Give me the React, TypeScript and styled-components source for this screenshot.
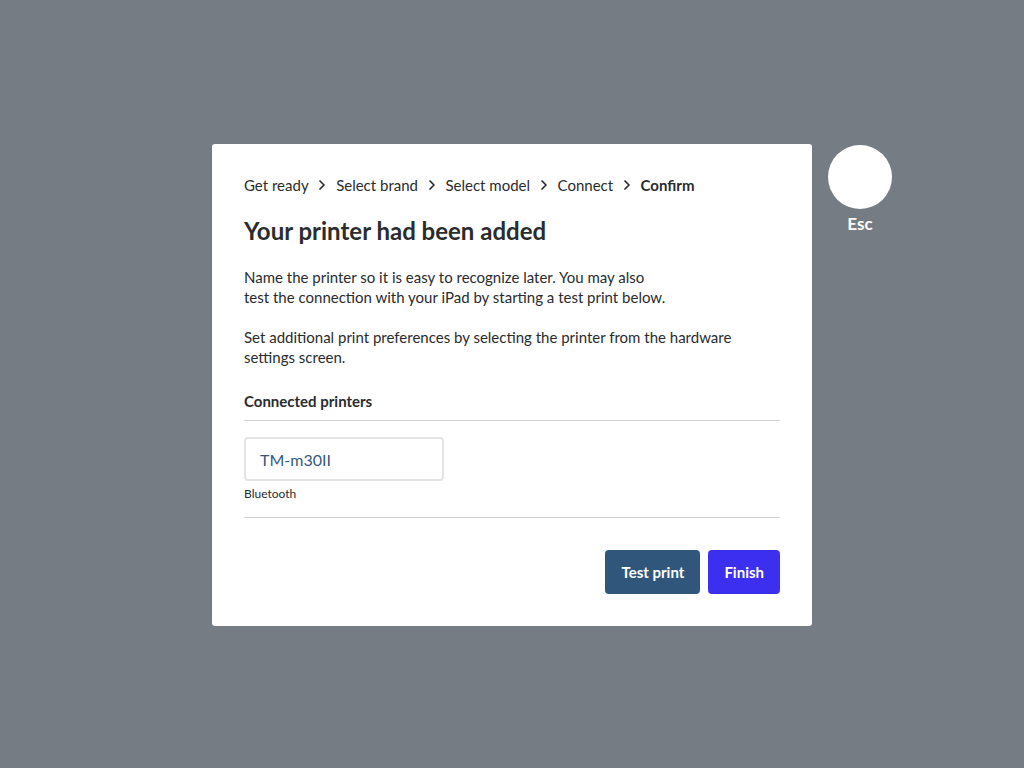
import React from "react";
import styled, { createGlobalStyle } from "styled-components";

const Global = createGlobalStyle`
  html, body { margin: 0; padding: 0; }
  body {
    background: #767c84;
    font-family: Lato, "Open Sans", sans-serif;
    color: #2a2c2e;
  }
`;

const Overlay = styled.div`
  width: 1024px;
  height: 768px;
  display: flex;
  align-items: center;
  justify-content: center;
`;

const ModalWrap = styled.div`
  position: relative;
  margin-top: 2px;
`;

const Modal = styled.div`
  width: 600px;
  box-sizing: border-box;
  padding: 32px;
  background: #fff;
  border-radius: 3px;
  display: flex;
  flex-direction: column;
`;

const EscButton = styled.div`
  position: absolute;
  left: calc(100% + 16px);
  top: 1px;
  display: flex;
  flex-direction: column;
  align-items: center;
  gap: 4px;
`;

const EscCircle = styled.div`
  width: 64px;
  height: 64px;
  border-radius: 50%;
  background: #fff;
`;

const EscLabel = styled.div`
  color: #fff;
  font-weight: 700;
  font-size: 17px;
  line-height: 22px;
`;

const Crumbs = styled.nav`
  display: flex;
  align-items: center;
  gap: 9.75px;
  font-size: 15px;
  line-height: 20px;
  height: 20px;
  margin-top: -1px;
`;

const Crumb = styled.span<{ $active?: boolean }>`
  font-weight: ${(p) => (p.$active ? 700 : 400)};
  color: #2a2c2e;
`;

const Title = styled.h1`
  margin: 21px 0 21px;
  font-size: 24px;
  line-height: 30px;
  font-weight: 700;
  color: #2a2c2e;
`;

const Para = styled.p`
  margin: 0 0 20px;
  font-size: 15px;
  line-height: 20px;
`;

const SectionLabel = styled.div`
  margin-top: 4px;
  font-size: 15px;
  line-height: 20px;
  font-weight: 700;
  padding-bottom: 9px;
  border-bottom: 1px solid #cfd1d3;
`;

const PrinterBlock = styled.div`
  padding: 16px 0 16px;
  border-bottom: 1px solid #cfd1d3;
  display: flex;
  flex-direction: column;
  gap: 6px;
`;

const NameInput = styled.div`
  width: 200px;
  height: 44px;
  box-sizing: border-box;
  border: 2px solid #e2e4e6;
  border-radius: 4px;
  padding: 0 14px;
  display: flex;
  align-items: center;
  font-size: 16px;
  color: #36597f;
`;

const Meta = styled.div`
  font-size: 12px;
  line-height: 14px;
  color: #2a2c2e;
`;

const Actions = styled.div`
  display: flex;
  justify-content: flex-end;
  gap: 8px;
  margin-top: 32px;
`;

const Button = styled.button<{ $variant: "secondary" | "primary" }>`
  height: 44px;
  padding: 0 16px;
  min-width: ${(p) => (p.$variant === "secondary" ? "95px" : "auto")};
  border: none;
  border-radius: 4px;
  font-family: inherit;
  font-size: 15px;
  font-weight: 700;
  color: #fff;
  background: ${(p) => (p.$variant === "primary" ? "#3c2ff0" : "#30577b")};
`;

const Chevron = () => (
  <svg width="8" height="12" viewBox="0 0 8 12" fill="none">
    <path d="M2 2l4 4-4 4" stroke="#2a2c2e" strokeWidth="1.7" strokeLinecap="round" strokeLinejoin="round" />
  </svg>
);

const steps = ["Get ready", "Select brand", "Select model", "Connect", "Confirm"];

export default function App() {
  return (
    <>
      <Global />
      <Overlay>
        <ModalWrap>
          <Modal>
            <Crumbs>
              {steps.map((s, i) => (
                <React.Fragment key={s}>
                  {i > 0 && <Chevron />}
                  <Crumb $active={i === steps.length - 1}>{s}</Crumb>
                </React.Fragment>
              ))}
            </Crumbs>
            <Title>Your printer had been added</Title>
            <Para>
              Name the printer so it is easy to recognize later. You may also
              <br />
              test the connection with your iPad by starting a test print below.
            </Para>
            <Para>
              Set additional print preferences by selecting the printer from the hardware settings screen.
            </Para>
            <SectionLabel>Connected printers</SectionLabel>
            <PrinterBlock>
              <NameInput>TM-m30II</NameInput>
              <Meta>Bluetooth</Meta>
            </PrinterBlock>
            <Actions>
              <Button $variant="secondary">Test print</Button>
              <Button $variant="primary">Finish</Button>
            </Actions>
          </Modal>
          <EscButton>
            <EscCircle />
            <EscLabel>Esc</EscLabel>
          </EscButton>
        </ModalWrap>
      </Overlay>
    </>
  );
}
